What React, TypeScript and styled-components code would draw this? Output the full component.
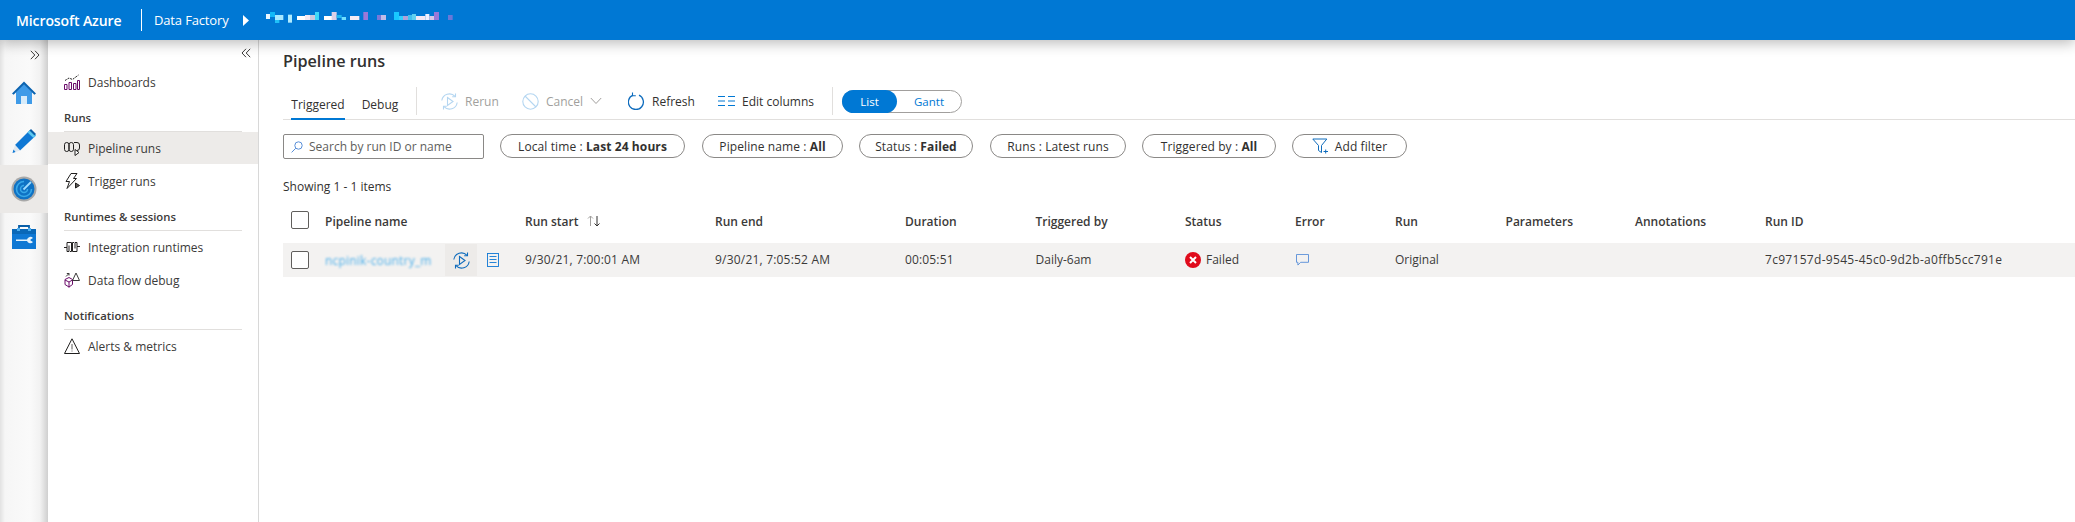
import React from 'react';
import styled, { createGlobalStyle } from 'styled-components';

const FONT = `"Open Sans", "Noto Sans", "Liberation Sans", sans-serif`;
const COLS = '42px 200px 190px 190px 130.5px 149.5px 110px 100px 110.5px 129.5px 130px 1fr';

const Global = createGlobalStyle`
  html, body { margin: 0; padding: 0; background: #fff; }
  body { font-family: ${FONT}; font-size: 12px; color: #323130; overflow: hidden; }
  * { box-sizing: border-box; }
`;

const Page = styled.div`width: 2075px; height: 522px; display: flex; flex-direction: column; overflow: hidden;`;

const Header = styled.header`
  height: 40px; flex: none; background: #0078d4; color: #fff; display: flex; align-items: center;
  position: relative; z-index: 3; box-shadow: 0 3px 14px rgba(0,0,0,.28);
`;
const Brand = styled.div`font-size: 14px; font-weight: 600; margin-left: 16px; width: 125px; letter-spacing: -.1px;`;
const HeadDivider = styled.div`width: 1px; height: 22px; background: #fff;`;
const Crumb = styled.div`font-size: 13px; margin-left: 12px; width: 89px; letter-spacing: -.15px; white-space: nowrap;`;
const Caret = styled.svg`width: 6px; height: 11px; flex: none;`;
const Mosaic = styled.svg`width: 200px; height: 16px; margin-left: 17px; flex: none;`;

const Body = styled.div`flex: 1; display: flex; min-height: 0;`;

const Rail = styled.nav`
  width: 48px; flex: none; display: flex; flex-direction: column;
  background: linear-gradient(to right, #e2e2e2 0, #f6f6f6 5px, #fafafa 30px, #f2f2f2 40px, #cfcfcf 48px);
`;
const RailTop = styled.div`height: 29px; display: flex; align-items: center; justify-content: flex-end; padding-right: 8px;`;
const RailItem = styled.div<{ $active?: boolean }>`
  height: 48px; display: flex; align-items: center; justify-content: center;
  background: ${p => (p.$active ? '#ebe9e7' : 'transparent')};
`;

const Nav = styled.aside`
  width: 211px; flex: none; border-right: 1px solid #d8d8d8; background: #fff; display: flex; flex-direction: column;
`;
const NavTop = styled.div`height: 26px; display: flex; align-items: center; justify-content: flex-end; padding: 0 7px 0 0;`;
const NavItem = styled.div<{ $active?: boolean }>`
  height: 32px; margin-bottom: 1px; display: flex; align-items: center; padding-left: 16px; gap: 8px; font-size: 12px;
  color: #3b3a39; background: ${p => (p.$active ? '#edebe9' : 'transparent')};
`;
const NavSection = styled.div`
  height: 33px; margin: 0 16px; border-bottom: 1px solid #e1dfdd; font-size: 11.3px; font-weight: 600; color: #3b3a39;
  display: flex; align-items: center; padding-top: 5px;
`;

const Main = styled.main`flex: 1; min-width: 0; padding-left: 24px; display: flex; flex-direction: column;`;
const Title = styled.h1`margin: 0; height: 47px; padding-top: 8px; font-size: 16.2px; line-height: 26px; font-weight: 600; color: #323130;`;
const Bar = styled.div`height: 33px; flex: none; display: flex; align-items: flex-start; border-bottom: 1px solid #e1dfdd;`;
const Tab = styled.div<{ $active?: boolean; $w: number; $ml: number }>`
  width: ${p => p.$w}px; margin-left: ${p => p.$ml}px; height: 33px; text-align: center; font-size: 12px; line-height: 36px; color: #323130;
  border-bottom: 2px solid ${p => (p.$active ? '#0078d4' : 'transparent')}; white-space: nowrap;
`;
const BarRule = styled.div<{ $ml: number }>`width: 1px; height: 28px; background: #e1dfdd; margin-left: ${p => p.$ml}px; flex: none;`;
const Action = styled.div<{ $ml: number; $w: number; $off?: boolean }>`
  margin-left: ${p => p.$ml}px; width: ${p => p.$w}px; height: 28px; display: flex; align-items: center; gap: 7px; flex: none;
  font-size: 12px; white-space: nowrap; color: ${p => (p.$off ? '#a19f9d' : '#323130')};
`;
const Toggle = styled.div`
  margin: 3px 0 0 9px; width: 120px; height: 23px; border: 1px solid #a19f9d; border-radius: 12px; display: flex; flex: none; font-size: 11.5px;
`;
const ToggleOn = styled.div`
  width: 55px; margin: -1px 0 -1px -1px; background: #0078d4; color: #fff; border-radius: 12px; display: flex; align-items: center; justify-content: center;
`;
const ToggleOff = styled.div`flex: 1; color: #0078d4; display: flex; align-items: center; justify-content: center;`;

const Filters = styled.div`display: flex; margin-top: 14px; height: 25px; flex: none; align-items: flex-start;`;
const Search = styled.div`
  width: 201px; height: 25px; border: 1px solid #8a8886; border-radius: 2px; display: flex; align-items: center; padding-left: 7px; gap: 6px;
  color: #605e5c; font-size: 12px; white-space: nowrap;
`;
const Chip = styled.div<{ $w: number; $ml: number }>`
  width: ${p => p.$w}px; margin-left: ${p => p.$ml}px; height: 24px; border: 1px solid #8a8886; border-radius: 12px; flex: none;
  display: flex; align-items: center; justify-content: center; gap: 6px; font-size: 12px; letter-spacing: .1px; white-space: pre; color: #323130;
  b { font-weight: 700; }
`;
const Showing = styled.div`margin-top: 18px; height: 20px; font-size: 12px; line-height: 20px; color: #323130;`;

const TableRow = styled.div<{ $h: number; $fill?: boolean }>`
  display: grid; grid-template-columns: ${COLS}; align-items: center; height: ${p => p.$h}px; flex: none;
  background: ${p => (p.$fill ? '#f3f2f1' : 'transparent')};
`;
const CheckCell = styled.div`padding-left: 8px; display: flex; align-items: center;`;
const Check = styled.div`width: 18px; height: 18px; border: 1px solid #605e5c; border-radius: 2px; background: #fff;`;
const HeadCell = styled.div`font-size: 12px; font-weight: 600; color: #3b3a39; display: flex; align-items: center; gap: 8px; white-space: nowrap; padding-top: 2px;`;
const Cell = styled.div`font-size: 12px; color: #3b3a39; display: flex; align-items: center; white-space: nowrap; padding-bottom: 1px;`;
const NumCell = styled(Cell)<{ $ls: number }>`letter-spacing: ${p => p.$ls}px;`;
const NameCell = styled.div`display: flex; align-items: center; height: 100%;`;
const PipeName = styled.span`
  width: 120px; font-size: 12px; color: #4fb0ea; filter: blur(.9px); white-space: nowrap; overflow: hidden; letter-spacing: .2px;
`;
const HoverBtn = styled.div`
  width: 32px; height: 32px; background: #edebe9; display: flex; align-items: center; justify-content: center; flex: none;
`;
const DocBtn = styled.div`margin-left: 10px; display: flex; align-items: center;`;
const FailedIcon = styled.svg`width: 16px; height: 16px; margin-right: 5px; flex: none;`;
const CommentWrap = styled.span`margin-left: 1px; display: flex;`;

const mosaic: [number, number, number, number, string][] = [
  [0, 6, 12, 15, '#e8f6ff'], [12, 0, 15, 15, '#12b8f8'], [27, 9, 25, 15, '#a8e8ff'], [27, 24, 13, 9, '#20c0f8'],
  [66, 8, 12, 24, '#b0ecff'], [93, 12, 24, 12, '#ffffff'], [117, 9, 15, 15, '#f2e8f2'], [132, 9, 15, 15, '#ccc8de'],
  [147, 0, 12, 24, '#40d8f8'], [174, 12, 24, 12, '#ffffff'], [197, 0, 15, 24, '#dcd0e8'], [212, 9, 15, 9, '#20b8f0'],
  [227, 15, 13, 9, '#70e0ff'], [252, 12, 28, 12, '#f4ecf4'], [292, 0, 14, 24, '#9a78d8'], [333, 9, 12, 15, '#7a78d8'],
  [345, 9, 15, 15, '#c0bce8'], [384, 0, 15, 24, '#18c8ff'], [399, 12, 12, 12, '#30d0ff'], [411, 12, 15, 12, '#b0a0d8'],
  [426, 9, 12, 15, '#40c0f0'], [438, 6, 12, 18, '#60d0f0'], [450, 12, 28, 12, '#f4e8f4'], [478, 6, 12, 18, '#f0f0ff'],
  [490, 12, 14, 12, '#d8c8e8'], [504, 0, 15, 24, '#9a78d8'], [546, 9, 14, 15, '#6a78d8'],
];

const IconHome = () => (
  <svg width="24" height="24" viewBox="0 0 24 24">
    <path d="M4 11v12h16V11L12 3z" fill="#3f9be8" />
    <path d="M12 0.5 0 12.5l1.6 1.3L12 3.6l10.4 10.2 1.6-1.3z" fill="#0b63b0" />
    <rect x="9" y="15" width="6" height="8" fill="#d8ecfa" />
  </svg>
);
const IconPencil = () => (
  <svg width="24" height="24" viewBox="0 0 24 24">
    <path d="M3 16 18 1l6 5.500L8 21.500z" fill="#0f78d4" />
    <path d="M3 16l5 5.500L.5 24z" fill="#dfe8f0" />
    <path d="M1.500 20.500l2 2.500-3 1z" fill="#0f78d4" />
    <path d="M15.500 3.500 18 1l6 5.500-2.500 2.500z" fill="#5cc8f0" />
    <path d="M17.500 1.500 19 0l5 5-1.500 1.500z" fill="#0a5fa8" />
  </svg>
);
const IconMonitor = () => (
  <svg width="26" height="26" viewBox="0 0 26 26">
    <circle cx="13" cy="13" r="12.500" fill="#a8a8a8" />
    <circle cx="13" cy="13" r="10.500" fill="#0f72c4" />
    <path d="M13 5.500a7.500 7.500 0 1 0 7.500 7.500" fill="none" stroke="#38a8e8" strokeWidth="1.600" />
    <path d="M13 9.500a3.500 3.500 0 1 0 3.500 3.500" fill="none" stroke="#38a8e8" strokeWidth="1.500" />
    <path d="M12.500 13.500 20 6" stroke="#9fdcff" strokeWidth="1.800" />
  </svg>
);
const IconToolbox = () => (
  <svg width="24" height="24" viewBox="0 0 24 24">
    <path d="M7 5V1h10v4" fill="none" stroke="#0a5fa8" strokeWidth="1.800" />
    <rect y="4" width="24" height="20" fill="#0f78d4" />
    <rect y="4" width="24" height="5" fill="#0a68b8" />
    <rect x="5" y="3" width="3" height="3" fill="#50b0f0" /><rect x="16" y="3" width="3" height="3" fill="#50b0f0" />
    <path d="M4 14.500h11a3.500 3.500 0 0 1 6-1.500l-2.500 1.500v1l2.500 1.500a3.500 3.500 0 0 1-6-1h-11z" fill="#e4f2fc" />
  </svg>
);
const Chev = ({ left }: { left?: boolean }) => (
  <svg width="10" height="10" viewBox="0 0 10 10" fill="none" stroke="#3b3a39" strokeWidth="1">
    {left ? <path d="M5 .8 1 5l4 4.200M9.200.8 5.200 5l4 4.200" /> : <path d="M.8.8 4.800 5 .8 9.200M5 .8 9 5 5 9.200" />}
  </svg>
);
const NavDash = () => (
  <svg width="16" height="16" viewBox="0 0 16 16" fill="none" strokeWidth="1">
    <path d="M1 6.500 5 4l3.500 1.500L14.500 1" stroke="#201f1e" strokeDasharray="2 1" />
    <path d="M.5 10.500h2.500v5H.5zM5 8.500h2.500v7H5zM9.500 9.500H12v6H9.500zM13.500 6.500h2v9h-2z" stroke="#6a0a6a" />
  </svg>
);
const NavPipe = () => (
  <svg width="16" height="16" viewBox="0 0 16 16" fill="none" stroke="#201f1e" strokeWidth="1">
    <rect x=".5" y="2.500" width="4.500" height="9" rx="2.200" />
    <rect x="5" y="2.500" width="4.500" height="9" rx="2.200" />
    <path d="M10 2.500h3a2.500 2.500 0 0 1 2.500 2.500v3a2.500 2.500 0 0 1-2.500 2.500" />
    <path d="M11 9.500 15 12.500 11 15.500z" fill="#fff" stroke="#201f1e" />
  </svg>
);
const NavTrigger = () => (
  <svg width="16" height="16" viewBox="0 0 16 16" fill="none" stroke="#201f1e" strokeWidth="1">
    <path d="M7 .5h6L9.500 5.500h3L3 15.500l2.500-7H2z" />
    <path d="M11.500 10 15.500 12.500 11.500 15z" fill="#605e5c" />
  </svg>
);
const NavRuntime = () => (
  <svg width="16" height="16" viewBox="0 0 16 16" fill="none" stroke="#201f1e" strokeWidth="1">
    <path d="M0 8.500h3V3.500h4.500v9H6M16 7.500h-3v5H8.500v-9H10" />
    <path d="M5 6.500v6h-2V8.500M11 9.500v-6h2V7.500" />
  </svg>
);
const NavFlow = () => (
  <svg width="16" height="16" viewBox="0 0 16 16" fill="none" strokeWidth="1">
    <path d="M1 7.500 5 5.500l3.500 2v5l-3.500 2.500-4-2.500zM1 8l4 2 3.500-2M5 10v5.500" stroke="#6a0a6a" />
    <path d="M12 1 15.500 8.500h-7z" stroke="#3b3a39" />
    <path d="M2 4.500 5 1.500M5 1.500H2.800M5 1.500v2" stroke="#3b3a39" />
  </svg>
);
const NavAlert = () => (
  <svg width="16" height="16" viewBox="0 0 16 16" fill="none" stroke="#201f1e" strokeWidth="1">
    <path d="M8 .8 15.500 15.500H.5z" /><path d="M8 6v5.500M8 12.500v1" stroke="#605e5c" />
  </svg>
);
const Rerun = ({ faded }: { faded?: boolean }) => {
  const c = faded ? '#b4d6f1' : '#0f6cbd';
  return (
    <svg width="17" height="17" viewBox="0 0 17 17" fill="none" stroke={c} strokeWidth="1.100">
      <path d="M.8 7.500A7.700 7.700 0 0 1 14 3.300M16.200 9.500A7.700 7.700 0 0 1 3 13.700" />
      <path d="M14.500 .5v3.300h-3.300M2.500 16.500v-3.300h3.300" />
      <path d="M6.500 4.500 12 8.500l-5.500 4z" />
    </svg>
  );
};
const CancelIcon = () => (
  <svg width="17" height="17" viewBox="0 0 17 17" fill="none" stroke="#b4d6f1" strokeWidth="1.100">
    <circle cx="8.500" cy="8.500" r="7.700" /><path d="M3 3l11 11" />
  </svg>
);
const ChevDown = () => (
  <svg width="12" height="8" viewBox="0 0 12 8" fill="none" stroke="#a19f9d" strokeWidth="1"><path d="M.8 1 6 6.500 11.200 1" /></svg>
);
const RefreshIcon = () => (
  <svg width="17" height="18" viewBox="0 0 17 18" fill="none" stroke="#0f6cbd" strokeWidth="1.300">
    <path d="M11 3.200A7.500 7.500 0 1 1 5 3.100" /><path d="M4.500 .5v3.300h3.300" strokeWidth="1.100" />
  </svg>
);
const ColumnsIcon = () => (
  <svg width="17" height="12" viewBox="0 0 17 12" fill="none" stroke="#0078d4" strokeWidth="1.200">
    <path d="M0 1.500h7M10 1.500h7M0 6h7M10 6h7M0 10.500h7M10 10.500h7" />
  </svg>
);
const SearchIcon = () => (
  <svg width="12" height="12" viewBox="0 0 12 12" fill="none" stroke="#5a8fd8" strokeWidth="1">
    <circle cx="7.500" cy="4.500" r="3.700" /><path d="M4.800 7.200.6 11.400" />
  </svg>
);
const FilterIcon = () => (
  <svg width="17" height="16" viewBox="0 0 17 16" fill="none" stroke="#0f6cbd" strokeWidth="1">
    <path d="M.8 1h14L9.500 7.500v7l-3-2v-5z" /><path d="M11.500 13.500h4.500M13.700 11.500v4" />
  </svg>
);
const SortIcon = () => (
  <svg width="14" height="12" viewBox="0 0 14 12" fill="none" strokeWidth="1">
    <path d="M3.500 11V1M1 3.500 3.500 1 6 3.500" stroke="#a19f9d" /><path d="M10 1v10M7.500 8.500 10 11l2.500-2.500" stroke="#323130" />
  </svg>
);
const DocIcon = () => (
  <svg width="12" height="14" viewBox="0 0 12 14" fill="none" stroke="#0f78d4" strokeWidth=".9">
    <rect x=".5" y=".5" width="11" height="13" /><path d="M2.500 3.500h7M2.500 6.500h7M2.500 9.500h7" />
  </svg>
);
const CommentIcon = () => (
  <svg width="13" height="12" viewBox="0 0 14 13" fill="none" stroke="#5a8fd8" strokeWidth="1">
    <path d="M.5.500h13v8.500H5L2 12V9H.5z" />
  </svg>
);

const App = () => (
  <Page>
    <Global />
    <Header>
      <Brand>Microsoft Azure</Brand>
      <HeadDivider />
      <Crumb>Data Factory</Crumb>
      <Caret viewBox="0 0 6 11"><path d="M0 0l6 5.500L0 11z" fill="#fff" /></Caret>
      <Mosaic viewBox="0 0 600 48" preserveAspectRatio="none">
        {mosaic.map(([x, y, w, h, f], i) => <rect key={i} x={x} y={y} width={w} height={h} fill={f} />)}
      </Mosaic>
    </Header>
    <Body>
      <Rail>
        <RailTop><Chev /></RailTop>
        <RailItem><IconHome /></RailItem>
        <RailItem><IconPencil /></RailItem>
        <RailItem $active><IconMonitor /></RailItem>
        <RailItem><IconToolbox /></RailItem>
      </Rail>
      <Nav>
        <NavTop><Chev left /></NavTop>
        <NavItem><NavDash />Dashboards</NavItem>
        <NavSection>Runs</NavSection>
        <NavItem $active><NavPipe />Pipeline runs</NavItem>
        <NavItem><NavTrigger />Trigger runs</NavItem>
        <NavSection>Runtimes &amp; sessions</NavSection>
        <NavItem><NavRuntime />Integration runtimes</NavItem>
        <NavItem><NavFlow />Data flow debug</NavItem>
        <NavSection>Notifications</NavSection>
        <NavItem><NavAlert />Alerts &amp; metrics</NavItem>
      </Nav>
      <Main>
        <Title>Pipeline runs</Title>
        <Bar>
          <Tab $active $w={54} $ml={8}>Triggered</Tab>
          <Tab $w={40} $ml={15}>Debug</Tab>
          <BarRule $ml={16} />
          <Action $off $ml={24} $w={81}><Rerun faded />Rerun</Action>
          <Action $off $ml={0} $w={106}><CancelIcon />Cancel<ChevDown /></Action>
          <Action $ml={0} $w={90}><RefreshIcon />Refresh</Action>
          <Action $ml={0} $w={114}><ColumnsIcon />Edit columns</Action>
          <BarRule $ml={0} />
          <Toggle><ToggleOn>List</ToggleOn><ToggleOff>Gantt</ToggleOff></Toggle>
        </Bar>
        <Filters>
          <Search><SearchIcon />Search by run ID or name</Search>
          <Chip $w={185} $ml={16}><span>Local time : <b>Last 24 hours</b></span></Chip>
          <Chip $w={141} $ml={17}><span>Pipeline name : <b>All</b></span></Chip>
          <Chip $w={114} $ml={16}><span>Status : <b>Failed</b></span></Chip>
          <Chip $w={136} $ml={17}><span>Runs : Latest runs</span></Chip>
          <Chip $w={134} $ml={16}><span>Triggered by : <b>All</b></span></Chip>
          <Chip $w={115} $ml={16}><FilterIcon />Add filter</Chip>
        </Filters>
        <Showing>Showing 1 - 1 items</Showing>
        <TableRow $h={46}>
          <CheckCell><Check /></CheckCell>
          <HeadCell>Pipeline name</HeadCell>
          <HeadCell>Run start<SortIcon /></HeadCell>
          <HeadCell>Run end</HeadCell>
          <HeadCell>Duration</HeadCell>
          <HeadCell>Triggered by</HeadCell>
          <HeadCell>Status</HeadCell>
          <HeadCell>Error</HeadCell>
          <HeadCell>Run</HeadCell>
          <HeadCell>Parameters</HeadCell>
          <HeadCell>Annotations</HeadCell>
          <HeadCell>Run ID</HeadCell>
        </TableRow>
        <TableRow $h={34} $fill>
          <CheckCell><Check /></CheckCell>
          <NameCell>
            <PipeName>ncpinik-country_m</PipeName>
            <HoverBtn><Rerun /></HoverBtn>
            <DocBtn><DocIcon /></DocBtn>
          </NameCell>
          <NumCell $ls={.2}>9/30/21, 7:00:01 AM</NumCell>
          <NumCell $ls={.2}>9/30/21, 7:05:52 AM</NumCell>
          <NumCell $ls={.15}>00:05:51</NumCell>
          <Cell>Daily-6am</Cell>
          <Cell>
            <FailedIcon viewBox="0 0 16 16">
              <circle cx="8" cy="8" r="8" fill="#e00b1c" />
              <path d="M5 5l6 6M11 5l-6 6" stroke="#fff" strokeWidth="2" />
            </FailedIcon>
            Failed
          </Cell>
          <Cell><CommentWrap><CommentIcon /></CommentWrap></Cell>
          <Cell>Original</Cell>
          <Cell />
          <Cell />
          <NumCell $ls={.3}>7c97157d-9545-45c0-9d2b-a0ffb5cc791e</NumCell>
        </TableRow>
      </Main>
    </Body>
  </Page>
);

export default App;
